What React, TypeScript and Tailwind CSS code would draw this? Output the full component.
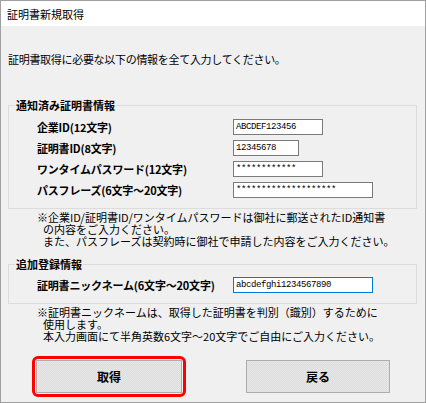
export default function App() {
  const rows: { label: string; value: string; w: string }[] = [
    { label: "企業ID(12文字)", value: "ABCDEF123456", w: "w-[90px]" },
    { label: "証明書ID(8文字)", value: "12345678", w: "w-[66px]" },
    { label: "ワンタイムパスワード(12文字)", value: "************", w: "w-[90px]" },
    { label: "パスフレーズ(6文字～20文字)", value: "********************", w: "w-[140px]" },
  ];
  const btn =
    "h-[33px] bg-[#e2e2e2] bg-[image:repeating-conic-gradient(#dcdcdc_0_25%,#e8e8e8_0_50%)] bg-[length:2px_2px] border border-[#adadad] font-bold text-[12px] flex items-center justify-center";
  return (
    <div className="w-[426px] h-[403px] border border-[#a0a0a0] bg-[#f0f0f0] flex flex-col font-['Noto_Sans_CJK_JP',sans-serif] text-[11px] leading-[12px] text-black overflow-hidden">
      <div className="h-[25px] shrink-0 bg-white flex items-center pl-[6px]">証明書新規取得</div>
      <div className="flex flex-col px-[7px]">
        <p className="mt-[27px] tracking-[-0.3px]">証明書取得に必要な以下の情報を全て入力してください。</p>

        <fieldset className="mt-[34px] border border-[#dcdcdc] pt-[8px] pb-[10px] w-[409px]">
          <legend className="ml-[6px] px-[1px] font-bold">通知済み証明書情報</legend>
          <div className="grid grid-cols-[196px_auto] gap-y-[5px] pl-[28px] items-center">
            {rows.map((r) => [
              <div key={r.label + "l"} className="font-bold tracking-[-0.2px]">{r.label}</div>,
              <div
                key={r.label + "v"}
                className={`${r.w} h-[16px] bg-white border border-[#7a7a7a] flex items-center pl-[2px] font-['Liberation_Mono',monospace] text-[9px] tracking-[-0.4px] overflow-hidden whitespace-nowrap`}
              >
                {r.value}
              </div>,
            ])}
          </div>
        </fieldset>

        <p className="mt-[2px] ml-[29px] pl-[6px] -indent-[6px]">
          ※企業ID/証明書ID/ワンタイムパスワードは御社に郵送されたID通知書
          <br />
          の内容をご入力ください。
          <br />
          また、パスフレーズは契約時に御社で申請した内容をご入力ください。
        </p>

        <fieldset className="mt-[11px] border border-[#dcdcdc] pt-[7px] pb-[10px] w-[409px]">
          <legend className="ml-[6px] px-[1px] font-bold">追加登録情報</legend>
          <div className="grid grid-cols-[196px_auto] pl-[28px] items-center">
            <div className="font-bold tracking-[-0.2px]">証明書ニックネーム(6文字～20文字)</div>
            <div className="w-[140px] h-[16px] bg-white border border-[#0078d7] flex items-center pl-[2px] font-['Liberation_Mono',monospace] text-[9px] tracking-[-0.4px] whitespace-nowrap overflow-hidden">
              abcdefghi1234567890
            </div>
          </div>
        </fieldset>

        <p className="mt-[2px] ml-[29px] pl-[6px] -indent-[6px]">
          ※証明書ニックネームは、取得した証明書を判別（識別）するために
          <br />
          使用します。
          <br />
          本入力画面にて半角英数6文字～20文字でご自由にご入力ください。
        </p>

        <div className="mt-[14px] flex items-center pl-[24px] gap-[60px]">
          <div className="border-[3px] border-[#ff0000] rounded-[6px] p-[1px]">
            <button className={`w-[146px] ${btn}`}>取得</button>
          </div>
          <button className={`w-[144px] ${btn}`}>戻る</button>
        </div>
      </div>
    </div>
  );
}
